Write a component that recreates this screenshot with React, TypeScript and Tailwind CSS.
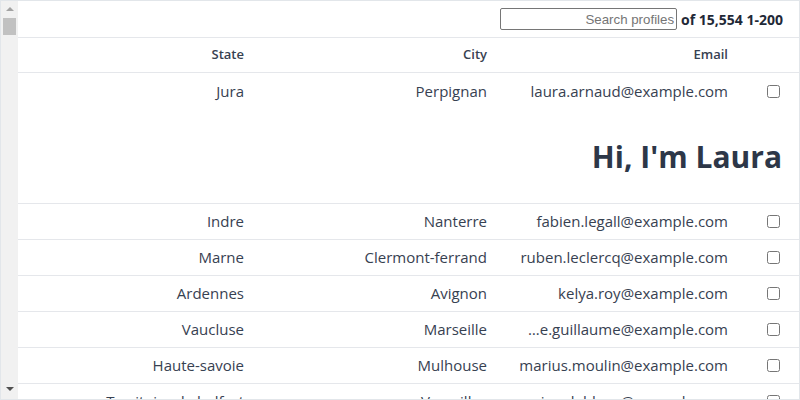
import React from "react";

type Profile = { state: string; city: string; email: string };

const profiles: Profile[] = [
  { state: "Indre", city: "Nanterre", email: "fabien.legall@example.com" },
  { state: "Marne", city: "Clermont-ferrand", email: "ruben.leclercq@example.com" },
  { state: "Ardennes", city: "Avignon", email: "kelya.roy@example.com" },
  { state: "Vaucluse", city: "Marseille", email: "…e.guillaume@example.com" },
  { state: "Haute-savoie", city: "Mulhouse", email: "marius.moulin@example.com" },
  { state: "Territoire de belfort", city: "Versailles", email: "maxime.leblanc@example.com" },
];

const cols = "grid grid-cols-[236px_243px_241px_1fr] items-center";

function Row({ p }: { p: Profile }) {
  return (
    <div className={`${cols} h-[36px] shrink-0 border-b border-[#e5e7eb] text-[15px] text-[#374151]`}>
      <div className="truncate pr-[10px] text-right">{p.state}</div>
      <div className="truncate pr-[10px] text-right">{p.city}</div>
      <div className="truncate pr-[10px] text-right">{p.email}</div>
      <div className="flex pl-[29px]">
        <input type="checkbox" className="m-0 h-[13px] w-[13px]" />
      </div>
    </div>
  );
}

export default function App() {
  return (
    <div
      className="flex h-[400px] w-[800px] overflow-hidden border border-[#e2e6ea] bg-white"
      style={{ fontFamily: '"Open Sans", "Noto Sans", sans-serif' }}
    >
      {/* fake left scrollbar */}
      <div className="flex w-[17px] shrink-0 flex-col items-center bg-[#f1f1f1]">
        <div className="mt-[6px] h-0 w-0 border-x-[4px] border-b-[4px] border-x-transparent border-b-[#a3a3a3]" />
        <div className="mt-[7px] h-[17px] w-[13px] bg-[#c1c1c1]" />
        <div className="flex-1" />
        <div className="mb-[8px] h-0 w-0 border-x-[4px] border-t-[4px] border-x-transparent border-t-[#505050]" />
      </div>

      <div className="flex min-w-0 flex-1 flex-col">
        <div className="flex h-[37px] shrink-0 items-center justify-end border-b border-[#e5e7eb] pr-[16px]">
          <input
            placeholder="Search profiles"
            className="h-[22px] w-[177px] rounded-[2px] border border-[#767676] px-[2px] text-right text-[13.3px] placeholder:text-[#757575]"
            style={{ fontFamily: '"Liberation Sans", Arial, sans-serif' }}
          />
          <span className="ml-[4px] text-[14px] font-bold text-[#1f2937]">of 15,554 1-200</span>
        </div>

        <div className={`${cols} h-[35px] shrink-0 border-b border-[#e5e7eb] text-[13px] font-semibold text-[#374151]`}>
          <div className="pr-[10px] text-right">State</div>
          <div className="pr-[10px] text-right">City</div>
          <div className="pr-[10px] text-right">Email</div>
          <div />
        </div>

        <div className="shrink-0 border-b border-[#e5e7eb]">
          <div className={`${cols} h-[36px] text-[15px] text-[#374151]`}>
            <div className="pr-[10px] text-right">Jura</div>
            <div className="pr-[10px] text-right">Perpignan</div>
            <div className="pr-[10px] text-right">laura.arnaud@example.com</div>
            <div className="flex pl-[29px]">
              <input type="checkbox" className="m-0 h-[13px] w-[13px]" />
            </div>
          </div>
          <div className="flex h-[94px] items-center justify-end pr-[17px]">
            <h1 className="text-[30px] font-bold text-[#2d3748]">Hi, I'm Laura</h1>
          </div>
        </div>

        {profiles.map((p) => (
          <Row key={p.email} p={p} />
        ))}
      </div>
    </div>
  );
}
